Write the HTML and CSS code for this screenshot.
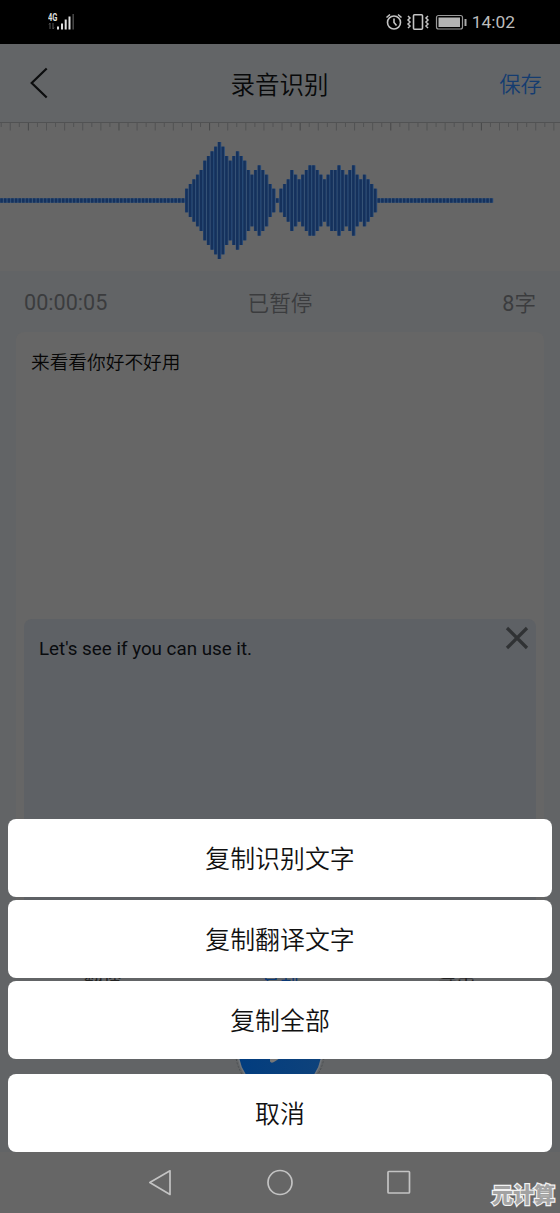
FILE: index.html
```html
<!DOCTYPE html>
<html lang="zh-CN">
<head>
<meta charset="utf-8">
<title>录音识别</title>
<link rel="stylesheet" href="styles.css">
</head>
<body>
<div class="phone">
  <header class="status">
    <svg class="signal" width="28" height="20" viewBox="0 0 28 20">
      <text class="net" x="0" y="8.500" textLength="9.5" lengthAdjust="spacingAndGlyphs">4G</text>
      <path d="M2 17v-6M1 12.5l1-1.5M5 11v6l1-1.5" stroke="#555" fill="none"/>
      <path d="M10 17.500v-3M14 17.500v-6M17.700 17.500v-10M21.500 17.500v-13" stroke="#e0e0e0" stroke-width="2"/>
      <path d="M25.200 17.500V2" stroke="#444" stroke-width="1.600"/>
    </svg>
    <div class="status-right">
      <svg width="83" height="20" viewBox="0 0 83 20">
        <g fill="none" stroke="#c4c4c4" stroke-width="1.600">
          <circle cx="9" cy="10.500" r="6.500"/>
          <path d="M9 6.500v4l2.500 3M1.500 5.500l3.500-3M16.500 5.500l-3.500-3"/>
          <rect x="28.500" y="2.800" width="9" height="14.500" rx="1"/>
          <path stroke-width="1.500" d="M23 4l2 2-2 2 2 2-2 2 2 2-2 2M43 4l-2 2 2 2-2 2 2 2-2 2 2 2"/>
          <rect x="51.500" y="3.500" width="26" height="13.500" rx="2" stroke="#999" stroke-width="1.200"/>
        </g>
        <rect x="53.500" y="5.500" width="21.500" height="9.500" fill="#b5b5b5"/>
        <rect x="79.500" y="7" width="2" height="7" fill="#aaa"/>
      </svg>
      <span class="clock">14:02</span>
    </div>
  </header>

  <nav class="titlebar">
    <svg class="back" width="20" height="34" viewBox="0 0 20 34"><path d="M16.700 2.500L1.700 17l15 14.500" fill="none" stroke="#0c0d0e" stroke-width="2.200"/></svg>
    <h1 class="title">录音识别</h1>
    <span class="save">保存</span>
  </nav>

  <svg class="wave" id="wave" width="560" height="149" viewBox="0 0 560 149"></svg>

  <section class="info">
    <span class="time">00:00:05</span><span class="state">已暂停</span><span class="count"><b>8</b>字</span>
  </section>

  <main class="paper">
    <p class="source">来看看你好不好用</p>
    <div class="translation">
      <p class="english">Let's see if you can use it.</p>
      <svg class="close" width="24" height="24" viewBox="0 0 24 24"><path d="M2 2l20 20M22 2L2 22" stroke="#303234" stroke-width="3.200"/></svg>
    </div>
  </main>

  <div class="tools"><span>翻译</span><span class="active">复制</span><span>导出</span></div>
  <svg class="play" width="92" height="92" viewBox="0 0 92 92">
    <defs><linearGradient id="blue"><stop offset="0" stop-color="#023d7f"/><stop offset="1" stop-color="#0e427b"/></linearGradient></defs>
    <circle cx="46" cy="46" r="44.500" fill="none" stroke="#4c5053" stroke-dasharray="2 1.500"/>
    <circle cx="46" cy="46" r="42" fill="url(#blue)" stroke="#70757b" stroke-width="1.500"/>
    <path d="M36 32v24.500q1 2 4 0.500L60 44z" fill="#777"/>
  </svg>

  <div class="sheet">
    <button class="option">复制识别文字</button>
    <button class="option">复制翻译文字</button>
    <button class="option">复制全部</button>
    <button class="option cancel">取消</button>
  </div>

  <footer class="keys">
    <svg width="560" height="61" viewBox="0 0 560 61">
      <g fill="none" stroke="#c3c3c3" stroke-width="1.700" stroke-linejoin="round">
        <path d="M170 18.800v23.600L149.800 30.500z"/>
        <circle cx="280" cy="30.500" r="12"/>
        <rect x="388" y="19.500" width="21.500" height="21.500" rx="0.800"/>
      </g>
    </svg>
    <span class="mark">元计算</span>
  </footer>
</div>
<script src="wave.js"></script>
</body>
</html>
```
FILE: wave.js
```js
// Ruler ticks and level bars of the recorded sound
const svg = document.getElementById('wave');
const levels = [
  ...Array(51).fill(0),
  1,2,3,4,5,7,8,9,10,11,10,8,7,8,9,8,7,5,4,5,6,5,4,2,1,
  0,
  1,2,3,5,4,3,4,5,6,6,5,4,3,4,5,5,6,5,4,5,6,4,3,4,3,2,1,
  ...Array(32).fill(0)
];
const pitch = 3.627;
const mid = 78.5;
let out = '<path d="M0 .5H560" stroke="#515253"/>';
for (let i = 0; i < 63; i++) {
  const x = 1.2 + i * 9.06;
  const long = i % 2 === 1;
  const end = long ? 8.5 : 5;
  out += `<path d="M${x} 1V${end}" stroke="${i % 10 === 3 ? '#474849' : '#525354'}"/>`;
}
levels.forEach((n, i) => {
  const h = n ? 11.8 + 4.67 * (n - 1) : 2.2;
  const x = i * pitch;
  out += `<rect x="${x}" y="${mid - h}" width="${pitch}" height="${2 * h}" fill="#2c4f7b"/>`;
  out += `<rect x="${x + .3}" y="${mid - h}" width="2.5" height="${2 * h}" fill="#15315c"/>`;
});
svg.innerHTML = out;
```
FILE: styles.css
```css
* { box-sizing: border-box; margin: 0; }
body { background: #626466; font-family: Roboto, "Noto Sans CJK SC", sans-serif; }
.phone { position: relative; width: 560px; height: 1213px; overflow: hidden; background: #626466; }
.status { height: 44px; background: #000; display: flex; justify-content: space-between; padding: 12px 45px 0 48px; }
.net { font-size: 10px; font-weight: 700; fill: #ddd; }
.status-right { display: flex; gap: 4px; }
.clock { font-size: 17.4px; line-height: 21px; color: #bdbdbd; }
.titlebar { height: 78px; display: grid; grid-template-columns: 1fr auto 1fr; align-items: center; padding: 0 18px 0 30px; background: #636567; }
.title { font-size: 24.5px; font-weight: 350; color: #08090a; transform: translateX(-6.5px); }
.save { justify-self: end; font-size: 21.4px; font-weight: 350; color: #143c70; padding-bottom: 2px; }
.wave { display: block; background: #666; }
.info { height: 61px; display: grid; grid-template-columns: 1fr auto 1fr; align-items: center; padding: 0 24px; font-size: 21.6px; font-weight: 350; color: #3b3c3e; }
.info span { padding-bottom: 1px; }
.info .time { font-weight: 400; padding: 2px 0 0; }
.count { justify-self: end; }
.count b { font-weight: 400; }
.paper { margin: 0 16px; height: 600px; border-radius: 8px; background: #666; display: flex; flex-direction: column; justify-content: space-between; }
.source { padding: 16px 15px 0; font-size: 18.7px; line-height: 30px; font-weight: 350; color: #070707; }
.translation { margin: 0 8px; height: 313px; border-radius: 8px; background: #5e6165; display: flex; justify-content: space-between; align-items: flex-start; padding: 7px 7px 0 15px; }
.english { font-size: 18.8px; line-height: 46px; color: #090b0e; }
.tools { position: absolute; left: 0; top: 964px; width: 560px; display: grid; grid-template-columns: 38px 38px 38px; justify-content: space-between; padding: 0 84px; font-size: 18.7px; color: #222; }
.tools .active { color: #0b3975; }
.play { position: absolute; left: 234px; top: 1005px; }
.sheet { position: absolute; left: 8px; top: 819px; width: 544px; display: flex; flex-direction: column; gap: 3px; }
.option { height: 78px; border: 0; border-radius: 8px; background: #fff; color: #111; font: 350 24.9px/74px Roboto, "Noto Sans CJK SC", sans-serif; padding: 4px 0 0; }
.cancel { margin-top: 12px; }
.keys { position: absolute; left: 0; top: 1152px; width: 560px; height: 61px; background: #666; }
.mark { position: absolute; right: 5px; bottom: 3px; font-size: 21px; line-height: 30px; font-weight: 900; color: #a2a2a2; -webkit-text-stroke: 2.5px #f2f2f2; paint-order: stroke fill; }
```
